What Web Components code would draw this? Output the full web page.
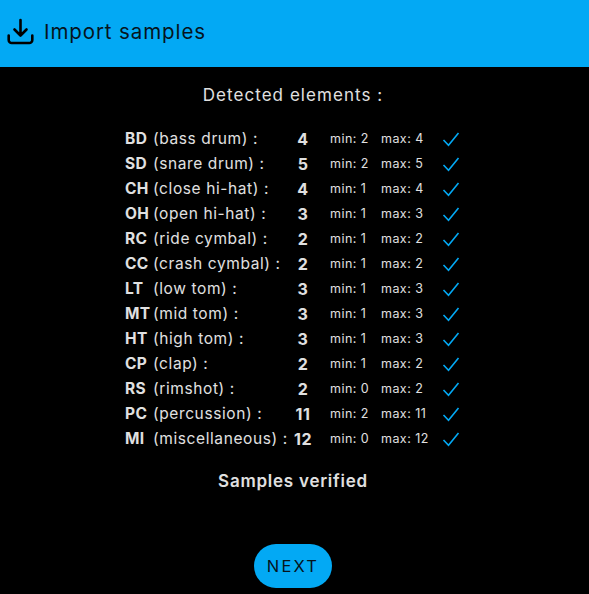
<!DOCTYPE html>
<html>
<head>
<meta charset="utf-8">
<style>
    html, body { margin: 0; background: #000; }
    body { font-family: Inter, "Liberation Sans", sans-serif; color: #e0e0e0; }
</style>
</head>
<body>
<import-page></import-page>
<script>
const ELEMENTS = [
    ["BD", "(bass drum) :", 4, 2, 4],
    ["SD", "(snare drum) :", 5, 2, 5],
    ["CH", "(close hi-hat) :", 4, 1, 4],
    ["OH", "(open hi-hat) :", 3, 1, 3],
    ["RC", "(ride cymbal) :", 2, 1, 2],
    ["CC", "(crash cymbal) :", 2, 1, 2],
    ["LT", "(low tom) :", 3, 1, 3],
    ["MT", "(mid tom) :", 3, 1, 3],
    ["HT", "(high tom) :", 3, 1, 3],
    ["CP", "(clap) :", 2, 1, 2],
    ["RS", "(rimshot) :", 2, 0, 2],
    ["PC", "(percussion) :", 11, 2, 11],
    ["MI", "(miscellaneous) :", 12, 0, 12],
];

class AppHeader extends HTMLElement
{
    constructor()
    {
        super();
        this.attachShadow({mode: "open"});
        this.shadowRoot.innerHTML = `
        <style>
            :host{
                display: flex;
                align-items: center;
                gap: 10px;
                box-sizing: border-box;
                height: 67px;
                padding: 0 0 4px 7px;
                background: #03a9f4;
                color: #06141c;
                font-size: 20.5px;
                letter-spacing: 0.9px;
            }
            svg{
                width: 27px;
                height: 27px;
                fill: none;
                stroke: #000;
                stroke-width: 2.6;
                stroke-linecap: round;
                stroke-linejoin: round;
            }
        </style>
        <svg viewBox="0 0 27 27">
            <path d="M13.5 2v15M7.5 11.5l6 6 6-6"/>
            <path d="M1.7 17.5v4.5a3 3 0 0 0 3 3h17.6a3 3 0 0 0 3-3v-4.5"/>
        </svg>
        <slot></slot>`;
    }
}
customElements.define("app-header", AppHeader);

class ElementRow extends HTMLElement
{
    constructor()
    {
        super();
        this.attachShadow({mode: "open"});
    }

    connectedCallback()
    {
        const [code, label, count, min, max] = this.data;
        this.shadowRoot.innerHTML = `
        <style>
            :host{
                display: grid;
                grid-template-columns: 28px 138px 24px 15px 51px 61px 20px;
                align-items: center;
                height: 25px;
                font-size: 15.5px;
                color: #e0e0e0;
                white-space: nowrap;
            }
            .code{ font-weight: 700; letter-spacing: 0.4px; }
            .label{ letter-spacing: 0.6px; }
            .count{ grid-column: 3; font-weight: 700; text-align: center; font-size: 16px; letter-spacing: 0.5px; }
            .limit{ font-size: 12.5px; letter-spacing: 0.45px; }
            .min{ grid-column: 5; }
            svg{
                width: 18px;
                height: 16px;
                fill: none;
                stroke: #03a9f4;
                stroke-width: 1.6;
            }
        </style>
        <span class="code">${code}</span>
        <span class="label">${label}</span>
        <span class="count">${count}</span>
        <span class="limit min">min: ${min}</span>
        <span class="limit">max: ${max}</span>
        <svg viewBox="0 0 18 16"><path d="M1.5 9l5 5.2L16.5 2"/></svg>`;
    }
}
customElements.define("element-row", ElementRow);

class NextButton extends HTMLElement
{
    constructor()
    {
        super();
        this.attachShadow({mode: "open"});
        this.shadowRoot.innerHTML = `
        <style>
            :host{
                display: flex;
                align-items: center;
                justify-content: center;
                width: 78px;
                height: 44px;
                border-radius: 22px;
                background: #03a9f4;
                color: #06141c;
                font-size: 16.5px;
                letter-spacing: 2.2px;
            }
        </style>
        <slot></slot>`;
    }
}
customElements.define("next-button", NextButton);

class ImportPage extends HTMLElement
{
    constructor()
    {
        super();
        this.attachShadow({mode: "open"});
        this.shadowRoot.innerHTML = `
        <style>
            :host{
                display: flex;
                flex-direction: column;
                width: 589px;
                height: 594px;
                overflow: hidden;
                background: #000;
                color: #e0e0e0;
            }
            .body{
                display: flex;
                flex-direction: column;
                align-items: center;
                padding-right: 3px;
            }
            h2{
                margin: 18px 0 0;
                height: 20px;
                line-height: 20px;
                font-size: 17px;
                font-weight: 400;
                letter-spacing: 1.05px;
            }
            .rows{
                align-self: flex-start;
                margin: 21px 0 0 125px;
            }
            .status{
                margin-top: 20px;
                height: 20px;
                line-height: 20px;
                font-size: 17px;
                font-weight: 600;
                letter-spacing: 0.75px;
            }
            next-button{ margin-top: 53px; }
        </style>
        <app-header>Import samples</app-header>
        <div class="body">
            <h2>Detected elements :</h2>
            <div class="rows"></div>
            <div class="status">Samples verified</div>
            <next-button>NEXT</next-button>
        </div>`;
        const rows = this.shadowRoot.querySelector(".rows");
        ELEMENTS.forEach(item => {
            const row = document.createElement("element-row");
            row.data = item;
            rows.appendChild(row);
        });
    }
}
customElements.define("import-page", ImportPage);
</script>
</body>
</html>
